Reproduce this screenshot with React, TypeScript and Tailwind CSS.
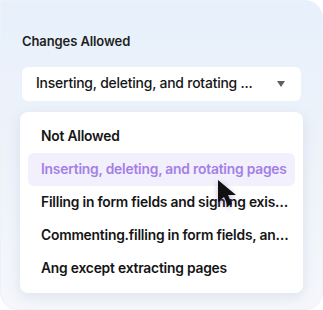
import React from 'react';

const options = [
    'Not Allowed',
    'Inserting, deleting, and rotating pages',
    'Filling in form fields and signing existing signature fields',
    'Commenting.filling in form fields, and signing',
    'Ang except extracting pages',
];

function Cursor() {
    return (
        <svg
            className="absolute left-[214px] top-[177px] drop-shadow-[0_2px_3px_rgba(90,60,160,0.35)]"
            width="26"
            height="32"
            viewBox="0 0 26 32"
        >
            <path d="M3 2 L3 24 L9 19 L13 28 L17 26 L13 17 L21 17 Z" fill="#111" />
        </svg>
    );
}

export default function App() {
    return (
        <div className="w-[323px] h-[310px] bg-white font-['Inter',sans-serif]">
            <div className="relative h-full rounded-tr-[18px] rounded-b-[18px] bg-gradient-to-b from-[#e7f0fb] via-[#eef3fa] to-[#f5f7fb] border border-[#eef1f5] px-5 pt-[31px]">
                <h2 className="text-[13px] font-semibold text-[#1f1f1f] tracking-[-0.1px] pl-[1px]">
                    Changes Allowed
                </h2>
                <div className="mt-[15px] mx-[1px] h-[34px] bg-white rounded-[6px] flex items-center pl-[14px] pr-[15px]">
                    <span className="flex-1 text-[13.9px] font-medium text-[#151515] tracking-[-0.2px] truncate">
                        Inserting, deleting, and rotating ...
                    </span>
                    <svg width="10" height="8" viewBox="0 0 10 8">
                        <path d="M1 1 L9 1 L5 7 Z" fill="#5f5f5f" />
                    </svg>
                </div>
                <div className="mt-[11px] -mx-[1px] bg-white rounded-[8px] shadow-[0_4px_14px_rgba(120,140,170,0.18)] px-2 py-[8px]">
                    {options.map((o, i) => (
                        <div
                            key={o}
                            className={
                                i === 1
                                    ? 'h-[33px] flex items-center pl-[13px] pr-[4px] rounded-[6px] bg-[#f1f0fc] text-[#a57fe6] text-[13.8px] font-semibold tracking-[-0.2px] whitespace-nowrap overflow-hidden'
                                    : 'h-[33px] flex items-center pl-[13px] pr-[3px] text-[#151515] text-[13.8px] font-semibold tracking-[-0.2px]'
                            }
                        >
                            <span className="truncate">{o}</span>
                        </div>
                    ))}
                </div>
                <Cursor />
            </div>
        </div>
    );
}
